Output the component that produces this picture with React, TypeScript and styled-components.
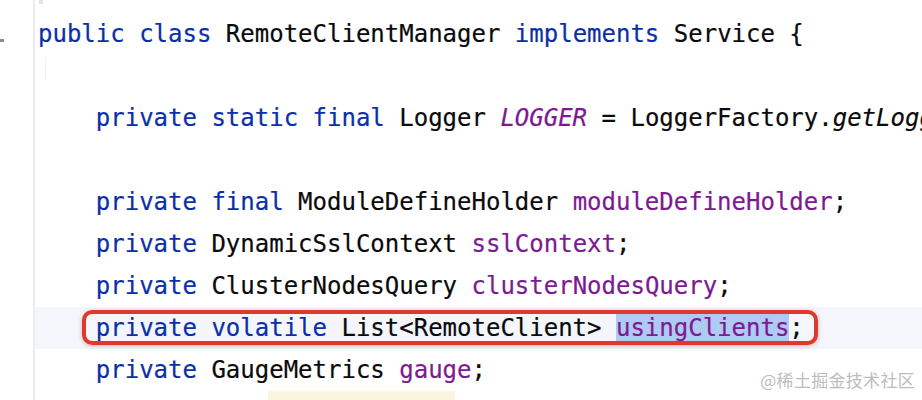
import styled, { createGlobalStyle, css } from "styled-components";

const GlobalStyle = createGlobalStyle`
  html, body {
    margin: 0;
    padding: 0;
    background: #ffffff;
  }
  body {
    width: 922px;
    height: 400px;
    overflow: hidden;
  }
`;

type Kind = "kw" | "plain" | "field" | "static" | "call";

type Token = {
  text: string;
  kind: Kind;
  selected?: boolean;
};

type CodeLine = {
  tokens: Token[];
  current?: boolean;
  boxed?: boolean;
};

const colors: Record<Kind, string> = {
  kw: "#0b2fa8",
  plain: "#0a0a0a",
  field: "#7d1a91",
  static: "#7d1a91",
  call: "#0a0a0a",
};

const Editor = styled.div`
  position: relative;
  display: flex;
  width: 922px;
  height: 400px;
  overflow: hidden;
  background: #ffffff;
`;

const Gutter = styled.div`
  position: relative;
  flex: 0 0 33px;
  border-right: 2px solid #ebebeb;
`;

const FoldMark = styled.span`
  position: absolute;
  left: 0;
  top: 39px;
  width: 4px;
  height: 3px;
  background: #8c8c8c;
`;

const Code = styled.div`
  position: relative;
  flex: 1;
  padding-top: 13px;
  font-family: "DejaVu Sans Mono", "Liberation Mono", monospace;
  font-size: 24px;
  white-space: pre;
  -webkit-text-stroke: 0.2px currentColor;
`;

const TopStub = styled.span`
  position: absolute;
  left: 4px;
  top: 0;
  width: 4px;
  height: 4px;
  background: #e4e4e4;
`;

const IndentGuide = styled.span`
  position: absolute;
  left: 10px;
  top: 58px;
  width: 1px;
  height: 22px;
  background: #efefef;
`;

const Line = styled.div<{ $current?: boolean }>`
  height: 42px;
  line-height: 42px;
  padding-left: 3px;
  ${(p) =>
    p.$current &&
    css`
      background: #f4f6fb;
    `}
`;

const Boxed = styled.span`
  position: relative;
  &::after {
    content: "";
    position: absolute;
    left: -14px;
    right: -14px;
    top: -4px;
    bottom: -3px;
    border: 4px solid #e0392b;
    border-radius: 10px;
    box-shadow: 0 1px 4px rgba(120, 30, 20, 0.3);
    pointer-events: none;
  }
`;

const Tok = styled.span<{ $kind: Kind; $selected?: boolean }>`
  color: ${(p) => colors[p.$kind]};
  font-style: ${(p) =>
    p.$kind === "static" || p.$kind === "call" ? "italic" : "normal"};
  ${(p) =>
    p.$selected &&
    css`
      background: #aecbf3;
    `}
`;

const PendingMark = styled.span`
  display: inline-block;
  margin-left: 230px;
  width: 187px;
  height: 42px;
  vertical-align: top;
  background: #fcf5de;
`;

const Watermark = styled.div`
  position: absolute;
  right: 7px;
  bottom: 8px;
  font-family: "Noto Sans CJK SC", "Noto Sans", sans-serif;
  font-size: 17px;
  color: #bdbdbd;
  letter-spacing: 0.3px;
`;

const IND = "    ";

const kw = (text: string): Token => ({ text, kind: "kw" });
const pl = (text: string): Token => ({ text, kind: "plain" });
const fd = (text: string, selected?: boolean): Token => ({
  text,
  kind: "field",
  selected,
});

const lines: CodeLine[] = [
  {
    tokens: [
      kw("public class"),
      pl(" RemoteClientManager "),
      kw("implements"),
      pl(" Service {"),
    ],
  },
  { tokens: [] },
  {
    tokens: [
      pl(IND),
      kw("private static final"),
      pl(" Logger "),
      { text: "LOGGER", kind: "static" },
      pl(" = LoggerFactory."),
      { text: "getLogger", kind: "call" },
      pl("(RemoteClientManager.class);"),
    ],
  },
  { tokens: [] },
  {
    tokens: [
      pl(IND),
      kw("private final"),
      pl(" ModuleDefineHolder "),
      fd("moduleDefineHolder"),
      pl(";"),
    ],
  },
  {
    tokens: [
      pl(IND),
      kw("private"),
      pl(" DynamicSslContext "),
      fd("sslContext"),
      pl(";"),
    ],
  },
  {
    tokens: [
      pl(IND),
      kw("private"),
      pl(" ClusterNodesQuery "),
      fd("clusterNodesQuery"),
      pl(";"),
    ],
  },
  {
    current: true,
    boxed: true,
    tokens: [
      kw("private volatile"),
      pl(" List<RemoteClient> "),
      fd("usingClients", true),
      pl(";"),
    ],
  },
  {
    tokens: [pl(IND), kw("private"), pl(" GaugeMetrics "), fd("gauge"), pl(";")],
  },
];

const renderTokens = (tokens: Token[]) =>
  tokens.map((t, i) => (
    <Tok key={i} $kind={t.kind} $selected={t.selected}>
      {t.text}
    </Tok>
  ));

export default function App() {
  return (
    <>
      <GlobalStyle />
      <Editor>
        <Gutter>
          <FoldMark />
        </Gutter>
        <Code>
          <TopStub />
          <IndentGuide />
          {lines.map((l, i) => (
            <Line key={i} $current={l.current}>
              {l.boxed ? (
                <>
                  {IND}
                  <Boxed>{renderTokens(l.tokens)}</Boxed>
                </>
              ) : (
                renderTokens(l.tokens)
              )}
            </Line>
          ))}
          <Line>
            <PendingMark />
          </Line>
        </Code>
        <Watermark>@稀土掘金技术社区</Watermark>
      </Editor>
    </>
  );
}
